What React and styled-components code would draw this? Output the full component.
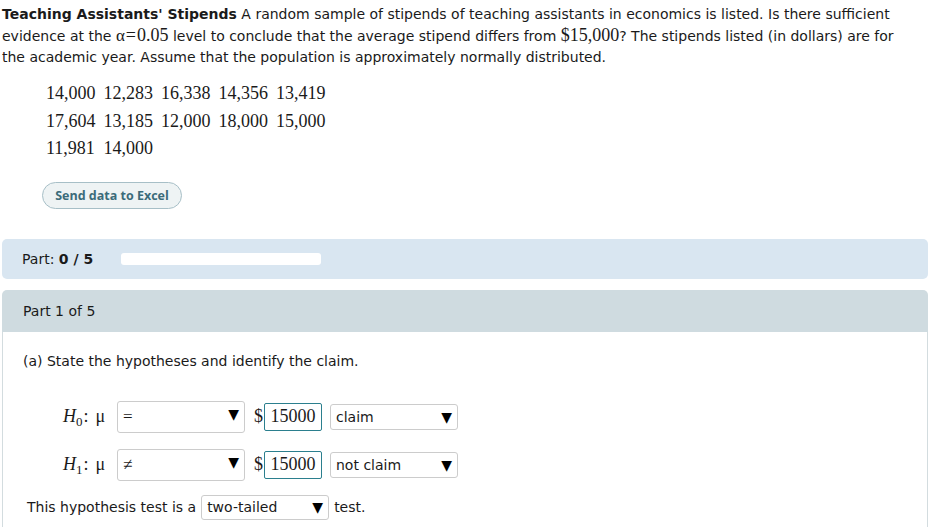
import React from "react"
import styled, { createGlobalStyle } from "styled-components"

const Global = createGlobalStyle`
    body {
        margin: 0;
        background: #fff;
        font-family: "DejaVu Sans", Verdana, sans-serif;
        font-size: 14px;
        color: #1a1a1a;
    }
`

const Page = styled.div`
    width: 926px;
    padding: 4px 3px 0 2px;
`

const Intro = styled.p`
    margin: 0;
    width: 908px;
    line-height: 21px;
    b {
        font-weight: bold;
    }
`

const Serif = styled.span`
    font-family: "Liberation Serif", "Times New Roman", serif;
    font-size: ${p => p.size || 18}px;
    margin: 0 ${p => p.pad || 0}px;
`

const DataGrid = styled.div`
    display: grid;
    grid-template-columns: repeat(5, max-content);
    column-gap: 8px;
    margin: 12px 0 0 44px;
    font-family: "Liberation Serif", "Times New Roman", serif;
    font-size: 18px;
    line-height: 27.5px;
`

const ExcelButton = styled.button`
    display: block;
    margin: 19px 0 0 40px;
    height: 27px;
    width: 140px;
    border: 1px solid #a7bfc7;
    border-radius: 14px;
    background: #eef3f4;
    color: #3b6b7a;
    font-family: "Open Sans", Lato, sans-serif;
    font-weight: 700;
    font-size: 12.5px;
    padding: 0;
`

const ProgressBar = styled.div`
    margin-top: 30px;
    height: 40px;
    border-radius: 5px;
    background: #d9e6f1;
    display: flex;
    align-items: center;
    padding-left: 20px;
    gap: 28px;
`

const Track = styled.div`
    width: 200px;
    height: 12px;
    border-radius: 3px;
    background: #fff;
`

const PartHeader = styled.div`
    margin-top: 11px;
    height: 42px;
    border-radius: 5px 5px 0 0;
    background: #cfdbe0;
    display: flex;
    align-items: center;
    padding-left: 21px;
`

const Body = styled.div`
    border-left: 1px solid #d3dcdf;
    border-right: 1px solid #d3dcdf;
    padding: 19px 0 20px 20px;
`

const Question = styled.div`
    line-height: 20px;
`

const HypRow = styled.div`
    display: flex;
    align-items: center;
    height: 32px;
    margin-top: ${p => p.top}px;
    padding-left: 40px;
`

const Label = styled.span`
    font-family: "Liberation Serif", "Times New Roman", serif;
    font-size: 18px;
    width: 54px;
    i {
        font-style: italic;
    }
    sub {
        font-size: 13px;
        vertical-align: -4px;
        line-height: 0;
    }
    em {
        font-style: normal;
        margin: 0 7px 0 1px;
    }
`

const Select = styled.div`
    box-sizing: border-box;
    display: flex;
    align-items: center;
    justify-content: space-between;
    width: 128px;
    height: ${p => p.h}px;
    border: 1px solid #cccccc;
    border-radius: 3px;
    padding: 0 5px 0 5px;
    background: #fff;
    font-family: ${p => (p.serif ? `"Liberation Serif", "Times New Roman", serif` : `"DejaVu Sans", Verdana, sans-serif`)};
    font-size: ${p => (p.serif ? 17 : 14)}px;
    &::after {
        content: "▼";
        font-family: "DejaVu Sans", sans-serif;
        font-size: 14px;
        color: #000;
        margin-bottom: ${p => (p.serif ? 6 : 0)}px;
    }
`

const Dollar = styled.span`
    font-family: "Liberation Serif", "Times New Roman", serif;
    font-size: 18px;
    margin: 0 1px 0 9px;
`

const Input = styled.div`
    box-sizing: border-box;
    width: 58px;
    height: 28px;
    border: 1px solid #2b7f8e;
    border-radius: 2px;
    display: flex;
    align-items: center;
    justify-content: center;
    font-family: "Liberation Serif", "Times New Roman", serif;
    font-size: 18px;
`

const Gap = styled.span`
    width: ${p => p.w}px;
`

const TestRow = styled.div`
    display: flex;
    align-items: center;
    margin-top: 14px;
    padding-left: 4px;
    gap: 5px;
`

const numbers = [
    "14,000", "12,283", "16,338", "14,356", "13,419",
    "17,604", "13,185", "12,000", "18,000", "15,000",
    "11,981", "14,000",
]

const Hypothesis = ({ idx, sign, claim, top }) => (
    <HypRow top={top}>
        <Label>
            <i>H</i><sub>{idx}</sub><em>:</em>μ
        </Label>
        <Select h={32} serif>{sign}</Select>
        <Dollar>$</Dollar>
        <Input>15000</Input>
        <Gap w={8} />
        <Select h={26}>{claim}</Select>
    </HypRow>
)

const App = () => (
    <Page>
        <Global />
        <Intro>
            <b>Teaching Assistants' Stipends</b> A random sample of stipends of teaching assistants in economics is listed. Is there sufficient evidence at the <Serif size={17}>α</Serif><Serif pad={1}>=</Serif><Serif>0.05</Serif> level to conclude that the average stipend differs from <Serif>$15,000</Serif>? The stipends listed (in dollars) are for the academic year. Assume that the population is approximately normally distributed.
        </Intro>
        <DataGrid>
            {numbers.map((n, i) => <span key={i}>{n}</span>)}
        </DataGrid>
        <ExcelButton>Send data to Excel</ExcelButton>
        <ProgressBar>
            <span>Part: <b>0 / 5</b></span>
            <Track />
        </ProgressBar>
        <PartHeader>Part 1 of 5</PartHeader>
        <Body>
            <Question>(a) State the hypotheses and identify the claim.</Question>
            <Hypothesis idx={0} sign="=" claim="claim" top={30} />
            <Hypothesis idx={1} sign="≠" claim="not claim" top={16} />
            <TestRow>
                This hypothesis test is a
                <Select h={25}>two-tailed</Select>
                test.
            </TestRow>
        </Body>
    </Page>
)

export default App
